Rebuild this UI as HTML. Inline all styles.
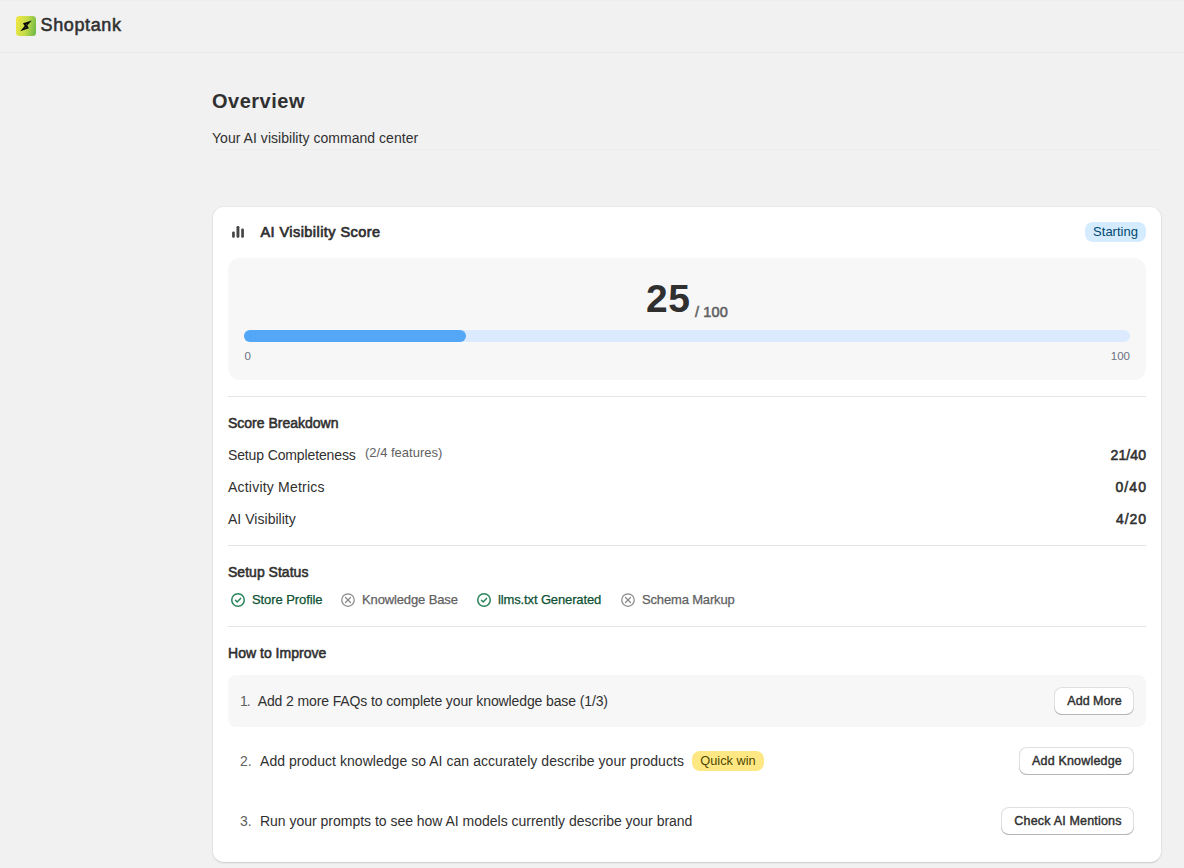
<!DOCTYPE html>
<html lang="en">
<head>
<meta charset="utf-8">
<title>Shoptank – Overview</title>
<style>
*{box-sizing:border-box;margin:0;padding:0}
html,body{width:1184px;height:868px;overflow:hidden}
body{background:#f1f1f1;font-family:"Liberation Sans",sans-serif;color:#303030;font-size:14px;position:relative}
.abs{position:absolute;white-space:nowrap;line-height:1}
.topbar{position:absolute;left:0;top:0;width:1184px;height:53px;border-bottom:1px solid #e9e9e9;border-top:1px solid #eee}
.logo{position:absolute;left:16px;top:16px;width:20px;height:20px}
.brand{left:40.5px;top:16.3px;font-size:18px;font-weight:400;color:#303030;-webkit-text-stroke:0.55px #303030;letter-spacing:0.63px}
.h1{left:212px;top:91px;font-size:20px;font-weight:700;color:#303030;letter-spacing:0.5px}
.sub{left:212px;top:131px;font-size:14px;color:#303030;letter-spacing:0.04px}
.hr0{position:absolute;left:212px;top:149px;width:949px;height:1px;background:#ededed}
.card{position:absolute;left:212px;top:206px;width:950px;height:657px;background:#fff;border-radius:12px;border:1px solid #e3e3e3;border-top-color:#e8e8e8;border-bottom-color:#d2d2d2;box-shadow:0 1px 1px rgba(0,0,0,0.04)}
.b{font-weight:700}
.sb{font-weight:400;-webkit-text-stroke:0.55px #303030}
.hr{position:absolute;left:228px;width:918px;height:1px;background:#e5e5e5}
.scorebox{position:absolute;left:228px;top:258px;width:918px;height:122px;background:#f7f7f7;border-radius:12px}
.track{position:absolute;left:244px;top:330px;width:886px;height:12px;border-radius:6px;background:#dbeafe}
.fill{position:absolute;left:0;top:0;width:222px;height:12px;border-radius:6px;background:#53a7f6}
.badge{position:absolute;border-radius:8px;height:20px;white-space:nowrap;font-size:13px;line-height:20px;text-align:center}
.btn{position:absolute;height:28px;top:0;border-radius:8px;background:#fff;box-shadow:0 -1px 0 0 #b5b5b5 inset,0 0 0 1px #e0e0e0 inset;padding-left:1px;font-size:12.5px;font-weight:400;-webkit-text-stroke:0.42px #303030;color:#303030;text-align:center;line-height:29px;white-space:nowrap}
.row1{position:absolute;left:228px;top:675px;width:918px;height:52px;border-radius:8px;background:#f7f7f7}
.g{color:#0c5132;-webkit-text-stroke:0.25px #0c5132}
.m{color:#616161}
.ms{-webkit-text-stroke:0.25px #616161}
.lb{color:#6b7280}
</style>
</head>
<body>
<div class="topbar"></div>
<svg class="logo" viewBox="0 0 20 20">
  <defs><linearGradient id="lg" x1="0" y1="0.4" x2="1" y2="0.6"><stop offset="0" stop-color="#ede640"/><stop offset="0.5" stop-color="#c6dc48"/><stop offset="1" stop-color="#72bb47"/></linearGradient></defs>
  <rect x="0" y="0" width="20" height="20" rx="3.5" fill="url(#lg)"/>
  <path d="M6.95 7.35 L15.8 4.4 L11.3 9.6 L12.9 12.3 L4.2 15.35 L8.7 10.0 Z" fill="#0a0a0a"/>
  <path d="M9.6 8.2 L11.2 7.7 L10.3 8.9 Z M9.6 10.9 L10.5 11.5 L8.9 12.1 Z" fill="#b9c93a" opacity="0.6"/>
</svg>
<div class="abs brand">Shoptank</div>

<div class="abs h1">Overview</div>
<div class="abs sub">Your AI visibility command center</div>
<div class="hr0"></div>

<div class="card"></div>

<svg class="abs" style="left:231px;top:225px;width:14px;height:14px" viewBox="0 0 14 14"><rect x="1.1" y="6.5" width="2.7" height="6.3" rx="1.2" fill="#454545"/><rect x="5.5" y="1.1" width="2.9" height="11.6" rx="1.2" fill="#454545"/><rect x="10.2" y="3.6" width="2.7" height="9.2" rx="1.2" fill="#454545"/></svg>
<div class="abs sb" style="left:260.5px;top:225px;font-size:14.5px;letter-spacing:0.43px;-webkit-text-stroke-width:0.7px">AI Visibility Score</div>
<div class="badge" style="left:1085px;top:222px;width:61px;background:#d5ebff;color:#00496f">Starting</div>

<div class="scorebox"></div>
<div class="abs b" style="left:646px;top:278.5px;font-size:39px;letter-spacing:0.5px">25</div>
<div class="abs m" style="left:695px;top:305.3px;font-size:14.5px;letter-spacing:0.12px;-webkit-text-stroke:0.55px #616161">/ 100</div>
<div class="track"><div class="fill"></div></div>
<div class="abs lb" style="left:244.5px;top:351px;font-size:11.5px">0</div>
<div class="abs lb" style="right:54px;top:351px;font-size:11.5px">100</div>

<div class="hr" style="top:396px"></div>
<div class="abs sb" style="left:228px;top:416px">Score Breakdown</div>

<div class="abs" style="left:228px;top:448px;letter-spacing:-0.13px">Setup Completeness</div>
<div class="abs m" style="left:365px;top:446px;font-size:13px">(2/4 features)</div>
<div class="abs sb" style="right:37.9px;top:448px;letter-spacing:0.1px">21/40</div>
<div class="abs" style="left:228px;top:480px;letter-spacing:0.21px">Activity Metrics</div>
<div class="abs sb" style="right:36.9px;top:480px;letter-spacing:1.1px">0/40</div>
<div class="abs" style="left:228px;top:512px;letter-spacing:0.03px">AI Visibility</div>
<div class="abs sb" style="right:37.1px;top:512px;letter-spacing:0.9px">4/20</div>

<div class="hr" style="top:545px"></div>
<div class="abs sb" style="left:228px;top:565px;letter-spacing:0.02px">Setup Status</div>

<svg class="abs" style="left:230px;top:592px;width:16px;height:16px" viewBox="0 0 16 16" fill="none" stroke="#29845a" stroke-width="1.5" stroke-linecap="round" stroke-linejoin="round"><circle cx="8" cy="8" r="6.25"/><path d="M5.5 8.3l1.7 1.7 3.3-3.6"/></svg>
<div class="abs g" style="left:252px;top:593px;font-size:13px;letter-spacing:-0.08px">Store Profile</div>
<svg class="abs" style="left:340px;top:592px;width:16px;height:16px" viewBox="0 0 16 16" fill="none" stroke="#8a8a8a" stroke-width="1.25" stroke-linecap="round" stroke-linejoin="round"><circle cx="8" cy="8" r="6.25"/><path d="M5.5 5.5L10.5 10.5" stroke-width="1.25"/><path d="M10.5 5.5L5.5 10.5" stroke-width="1.25"/></svg>
<div class="abs m ms" style="left:362px;top:593px;font-size:13px;letter-spacing:-0.13px">Knowledge Base</div>
<svg class="abs" style="left:476px;top:592px;width:16px;height:16px" viewBox="0 0 16 16" fill="none" stroke="#29845a" stroke-width="1.5" stroke-linecap="round" stroke-linejoin="round"><circle cx="8" cy="8" r="6.25"/><path d="M5.5 8.3l1.7 1.7 3.3-3.6"/></svg>
<div class="abs g" style="left:498px;top:593px;font-size:13px;letter-spacing:-0.13px">llms.txt Generated</div>
<svg class="abs" style="left:620px;top:592px;width:16px;height:16px" viewBox="0 0 16 16" fill="none" stroke="#8a8a8a" stroke-width="1.25" stroke-linecap="round" stroke-linejoin="round"><circle cx="8" cy="8" r="6.25"/><path d="M5.5 5.5L10.5 10.5" stroke-width="1.25"/><path d="M10.5 5.5L5.5 10.5" stroke-width="1.25"/></svg>
<div class="abs m ms" style="left:642px;top:593px;font-size:13px;letter-spacing:-0.16px">Schema Markup</div>

<div class="hr" style="top:626px"></div>
<div class="abs sb" style="left:228px;top:646px;letter-spacing:0.02px">How to Improve</div>

<div class="row1"></div>
<div class="abs" style="left:240px;top:694px;letter-spacing:-1.1px"><span class="m">1.</span></div>
<div class="abs" style="left:257.7px;top:694px;letter-spacing:-0.117px">Add 2 more FAQs to complete your knowledge base (1/3)</div>
<div class="btn" style="left:1054px;top:687px;width:80px;letter-spacing:0.03px">Add More</div>

<div class="abs" style="left:240px;top:754px"><span class="m">2.</span></div>
<div class="abs" style="left:260px;top:754px;letter-spacing:0.045px">Add product knowledge so AI can accurately describe your products</div>
<div class="badge" style="left:692px;top:751px;width:72px;background:#ffe783;color:#4f4700;font-size:12.8px">Quick win</div>
<div class="btn" style="left:1019px;top:747px;width:115px;letter-spacing:0.19px">Add Knowledge</div>

<div class="abs" style="left:240px;top:814px"><span class="m">3.</span></div>
<div class="abs" style="left:260px;top:814px;letter-spacing:-0.016px">Run your prompts to see how AI models currently describe your brand</div>
<div class="btn" style="left:1001px;top:807px;width:133px;letter-spacing:0.18px">Check AI Mentions</div>
</body>
</html>
